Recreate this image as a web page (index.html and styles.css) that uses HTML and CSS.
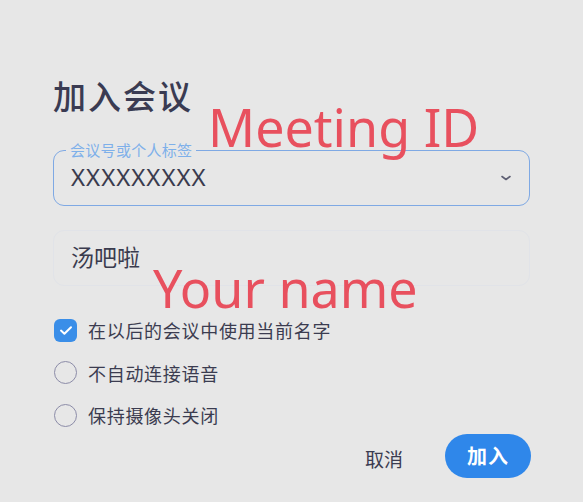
FILE: index.html
```html
<!DOCTYPE html>
<html lang="zh">
<head>
<meta charset="utf-8">
<link rel="stylesheet" href="styles.css">
</head>
<body>
<div class="page">
  <div class="dialog">
    <h1 class="title">加入会议</h1>
    <div class="field field-active">
      <span class="field-label">会议号或个人标签</span>
      <span class="field-value latin">XXXXXXXXX</span>
      <svg class="chevron" width="12" height="8" viewBox="0 0 12 8"><path d="M2 2.5 L6 5.5 L10 2.5" fill="none" stroke="#5f6074" stroke-width="1.6" stroke-linecap="round" stroke-linejoin="round"/></svg>
    </div>
    <div class="field field-name">
      <span class="field-value cjk">汤吧啦</span>
    </div>
    <ul class="options">
      <li class="option">
        <span class="box checked">
          <svg width="14" height="11" viewBox="0 0 14 11"><path d="M2 5.6 L5.4 8.8 L12 2.2" fill="none" stroke="#fff" stroke-width="2" stroke-linecap="round" stroke-linejoin="round"/></svg>
        </span>
        <span class="option-text">在以后的会议中使用当前名字</span>
      </li>
      <li class="option">
        <span class="box round"></span>
        <span class="option-text">不自动连接语音</span>
      </li>
      <li class="option">
        <span class="box round"></span>
        <span class="option-text">保持摄像头关闭</span>
      </li>
    </ul>
    <div class="actions">
      <button class="btn-cancel">取消</button>
      <button class="btn-join">加入</button>
    </div>
  </div>
  <div class="note note-id">Meeting ID</div>
  <div class="note note-name">Your name</div>
</div>
</body>
</html>
```
FILE: styles.css
```css
html, body {
  margin: 0;
  padding: 0;
  background: #e7e7e7;
}
.page {
  position: relative;
  width: 583px;
  height: 502px;
  overflow: hidden;
  font-family: "Noto Sans CJK SC", "Noto Sans", sans-serif;
  color: #3b3c50;
}
.dialog {
  padding: 75px 53px 0 53px;
  display: flex;
  flex-direction: column;
}
.title {
  margin: 0;
  font-size: 33px;
  line-height: 40px;
  font-weight: 500;
  color: #3a3b52;
  letter-spacing: 2px;
}
.field {
  position: relative;
  height: 56px;
  box-sizing: border-box;
  border-radius: 11px;
  display: flex;
  align-items: center;
  padding: 0 17px;
}
.field-active {
  margin-top: 35px;
  border: 1.5px solid #7fa9e4;
}
.field-name {
  margin-top: 24px;
  border: 1px solid #e1e3e8;
}
.field-label {
  position: absolute;
  left: 12px;
  top: -10px;
  padding: 0 4px;
  background: #e7e7e7;
  font-size: 15px;
  line-height: 18px;
  letter-spacing: 0.3px;
  color: #7eb0ea;
}
.field-value {
  position: relative;
  top: -2px;
}
.field-value.latin {
  font-family: "Noto Sans", sans-serif;
  font-size: 24px;
  letter-spacing: 1px;
  color: #3a3b4e;
}
.field-value.cjk {
  font-size: 23px;
  color: #3a3b4e;
}
.chevron {
  margin-left: auto;
  margin-right: 0;
}
.options {
  list-style: none;
  margin: 23px 0 0 1px;
  padding: 0;
  display: flex;
  flex-direction: column;
}
.option {
  height: 42.5px;
  display: flex;
  align-items: center;
  gap: 11px;
}
.box {
  width: 23px;
  height: 23px;
  box-sizing: border-box;
  display: flex;
  align-items: center;
  justify-content: center;
  flex: none;
}
.box.checked {
  background: #3a8ee8;
  border-radius: 6px;
}
.box.round {
  border: 1.5px solid #8c8ca8;
  border-radius: 50%;
}
.option-text {
  font-size: 18px;
  letter-spacing: 0.7px;
  color: #3b3c50;
}
.actions {
  display: flex;
  justify-content: flex-end;
  align-items: center;
  gap: 42px;
  margin-top: -3px;
}
.btn-cancel {
  border: none;
  background: none;
  padding: 0;
  margin-top: 6px;
  font-family: inherit;
  font-size: 19px;
  color: #3b3c50;
}
.btn-join {
  width: 86px;
  height: 44px;
  border: none;
  border-radius: 22px;
  background: #2f87ea;
  color: #fff;
  font-family: inherit;
  font-size: 20px;
  font-weight: 700;
  letter-spacing: 1px;
  margin-right: -1px;
}
.note {
  position: absolute;
  font-family: "Noto Sans", sans-serif;
  font-size: 52px;
  line-height: 52px;
  color: #e8505e;
  white-space: nowrap;
}
.note-id {
  left: 208px;
  top: 101px;
}
.note-name {
  left: 153px;
  top: 262px;
}
```
